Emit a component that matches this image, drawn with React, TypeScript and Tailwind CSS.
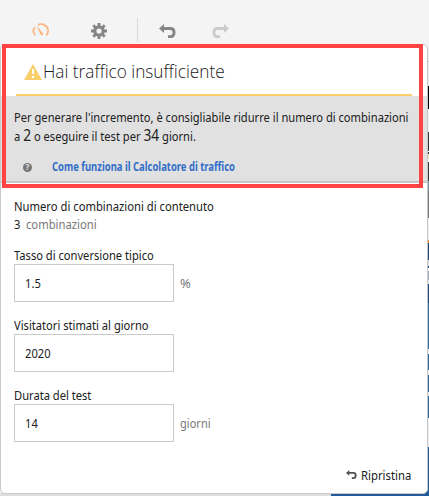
import React from "react";

const edge = [
  [0, 61, "bg-[#f4f4f4]"], [61, 1, "bg-[#cccccc]"], [62, 24, "bg-[#f0f0f0]"], [86, 23, "bg-black"], [109, 23, "bg-[#f0f0f0]"],
  [132, 19, "bg-[#333333]"], [151, 1, "bg-white"], [152, 2, "bg-[#333333]"], [154, 5, "bg-[#e8dfb2]"], [159, 3, "bg-white"],
  [162, 19, "bg-[#333333]"], [181, 10, "bg-[#7890a0]"], [191, 27, "bg-[#777777]"], [218, 22, "bg-[#f0f0f0]"], [240, 3, "bg-[#e98b25]"],
  [243, 17, "bg-[#1c4675]"], [260, 6, "bg-[#d8dde2]"], [266, 2, "bg-[#1c4675]"], [268, 3, "bg-white"], [271, 9, "bg-[#a8b1bf]"],
  [280, 4, "bg-[#e8edf2]"], [284, 19, "bg-[#1c4a80]"], [303, 46, "bg-[#2b72a8]"], [349, 5, "bg-[#eeeeee]"], [354, 16, "bg-[#286aa0]"],
  [370, 5, "bg-[#eeeeee]"], [375, 17, "bg-[#286aa0]"], [392, 4, "bg-[#eeeeee]"], [396, 22, "bg-[#286aa0]"], [418, 29, "bg-[#eeeeee]"],
  [447, 49, "bg-[#1f5c99]"],
] as const;

function UndoIcon({ className }: { className: string }) {
  return (
    <svg className={className} viewBox="0 0 17 14" fill="currentColor">
      <path d="M0 4.500 5 0v3h6.500c3.200 0 5 1.800 5 5.400S14.500 14 11.500 14H9v-2.800h2.200c1.600 0 2.400-.9 2.400-2.600S12.700 6 11.200 6H5v3Z" />
    </svg>
  );
}

function Toolbar() {
  return (
    <header className="flex h-11 shrink-0 items-start">
      <svg className="ml-[32px] mt-[23px] h-[14px] w-[18px] text-[#fbb27a]" viewBox="0 0 18 14" fill="none" stroke="currentColor" strokeWidth="1.6">
        <path d="M3.300 12.300C.8 9.800.9 6.600 2.900 4.200M5.800 1.800C10.600-.3 15.500 2.600 16.100 7c.3 2.200-.5 4-1.900 5.300" />
        <path d="m4.300 2.300 6.700 8.300c.5 1.200-1.300 2.400-2.200 1.300Z" fill="currentColor" stroke="none" />
      </svg>
      <svg className="ml-[41px] mt-[23px] h-4 w-4 text-[#858585]" viewBox="0 0 16 16" fill="none" stroke="currentColor">
        <circle cx="8" cy="8" r="4.200" strokeWidth="3.200" />
        <path strokeWidth="2.800" d="M8 0v3M8 13v3M0 8h3M13 8h3M2.300 2.300l2.100 2.100M11.600 11.600l2.100 2.100M2.300 13.700l2.100-2.100M11.600 4.400l2.100-2.100" />
      </svg>
      <div className="ml-[30px] mt-[18px] h-6 w-px bg-[#d8d8d8]" />
      <UndoIcon className="ml-[21px] mt-6 h-[14px] w-[17px] text-[#858585]" />
      <UndoIcon className="ml-[36px] mt-6 h-[14px] w-[17px] -scale-x-100 text-[#cbcbcb]" />
    </header>
  );
}

function Field({ label, value, unit }: { label: string; value: string; unit?: React.ReactNode }) {
  return (
    <div className="flex h-[70px] flex-col">
      <label className="h-[17px] origin-left scale-x-[.857] whitespace-nowrap leading-4">{label}</label>
      <div className="flex items-center">
        <div className="flex h-[38px] w-40 items-center border border-[#cacaca] px-[10px] pt-[2px]">
          <span className="origin-left scale-x-[.86]">{value}</span>
        </div>
        <span className="ml-[6px] mt-[2px] text-[#787878]">{unit}</span>
      </div>
    </div>
  );
}

export default function App() {
  return (
    <div className="relative flex h-[496px] w-[429px] flex-col overflow-hidden bg-[#f4f4f4] font-['Noto_Sans',sans-serif] text-[13px] text-[#202020]">
      <div className="absolute bottom-0 left-0 h-[3px] w-full bg-[#dedede]" />
      <div className="absolute bottom-0 left-[331px] h-[20px] w-[98px] bg-[#1f5c99]" />
      <div className="absolute right-0 top-0 w-px">
        {edge.map(([y, h, color]) => <div key={y} className={color} style={{ height: h }} />)}
      </div>
      <Toolbar />
      <main className="relative flex h-[450px] w-[428px] flex-col rounded-[5px] border border-[#c8c8c8] bg-white">
        <div className="ml-[15px] flex h-[51px] w-[396px] items-start border-b-2 border-[#fccf6b]">
          <svg className="ml-2 mt-[19px] h-4 w-[18px] shrink-0" viewBox="0 0 18 16">
            <path d="M9 0 18 16H0Z" fill="#f9cf6c" />
            <path d="M8 5h2v5H8zM8 12h2v2H8z" fill="white" />
          </svg>
          <h1 className="ml-px mt-[14px] origin-left scale-x-[.905] whitespace-nowrap font-['Open_Sans',sans-serif] text-[19px] font-light leading-6">Hai traffico insufficiente</h1>
        </div>
        <section className="h-[87px] border-b-2 border-[#c5c5c8] bg-[#e1e1e1] pl-[13px] pt-3">
          <p className="h-[18px] w-max origin-left scale-x-[.857] whitespace-nowrap leading-[18px]">Per generare l&apos;incremento, è consigliabile ridurre il numero di combinazioni</p>
          <p className="h-5 w-max origin-left scale-x-[.857] whitespace-nowrap leading-[18px]">a <span className="text-[16px]">2</span> o eseguire il test per <span className="text-[16px]">34</span> giorni.</p>
          <div className="ml-[9px] mt-[13px] flex h-4 items-center">
            <span className="flex size-[9px] items-center justify-center rounded-full bg-[#777777] text-[8px] font-bold leading-none text-[#e1e1e1]">?</span>
            <a className="ml-[20px] origin-left scale-x-[.822] whitespace-nowrap text-[11.500px] font-bold text-[#326ec8]">Come funziona il Calcolatore di traffico</a>
          </div>
        </section>
        <section className="flex flex-col pl-[13px] pt-[15px]">
          <div className="flex h-[49px] flex-col">
            <span className="h-[18px] origin-left scale-x-[.865] whitespace-nowrap leading-4">Numero di combinazioni di contenuto</span>
            <span className="h-[18px] origin-left scale-x-[.865] whitespace-nowrap leading-4">3 <span className="ml-[3px] text-[#787878]">combinazioni</span></span>
          </div>
          <Field label="Tasso di conversione tipico" value="1.5" unit="%" />
          <Field label="Visitatori stimati al giorno" value="2020" />
          <Field label="Durata del test" value="14" unit={<span className="inline-block origin-left scale-x-[.85]">giorni</span>} />
        </section>
        <footer className="ml-[345px] mt-[9px] flex h-5 items-center">
          <UndoIcon className="mb-[3px] mr-[4px] h-[9px] w-[11px] shrink-0 text-[#505050]" />
          <span className="origin-left scale-x-[.87]">Ripristina</span>
        </footer>
      </main>
      <div className="absolute left-[2px] top-[44px] h-[144px] w-[421px] border-4 border-[#ff4242]" />
    </div>
  );
}
